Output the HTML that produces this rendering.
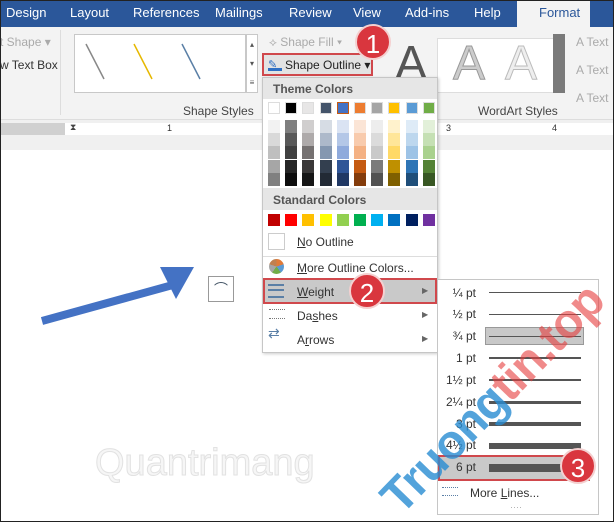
<!DOCTYPE html>
<html><head><meta charset="utf-8"><style>
*{margin:0;padding:0;box-sizing:border-box}
body{width:614px;height:522px;overflow:hidden;position:relative;background:#fff;font-family:"Liberation Sans",sans-serif;font-size:12px;color:#333}
.a{position:absolute}
.tab{position:absolute;top:5px;color:#fff;font-size:13px}
.sw{position:absolute;width:12px;height:12px}
.mi{position:absolute;left:297px;font-size:12px;color:#333}
.wl{position:absolute;font-size:12px;color:#333;text-align:right;width:40px;left:436px}
.ln{position:absolute;left:489px;width:92px;background:#555}
.badge{position:absolute;width:36px;height:36px;border-radius:50%;background:#d9363e;color:#fff;font-size:26px;text-align:center;line-height:36px;border:2px solid #f4d0d0}
</style></head><body>
<div class="a" style="left:0;top:0;width:614px;height:27px;background:#2b579a"></div>
<div class="tab" style="left:6px">Design</div>
<div class="tab" style="left:70px">Layout</div>
<div class="tab" style="left:133px">References</div>
<div class="tab" style="left:215px">Mailings</div>
<div class="tab" style="left:289px">Review</div>
<div class="tab" style="left:353px">View</div>
<div class="tab" style="left:405px">Add-ins</div>
<div class="tab" style="left:474px">Help</div>
<div class="a" style="left:517px;top:0;width:73px;height:28px;background:#f3f3f3;color:#2b579a;font-size:13px;padding:5px 0 0 22px">Format</div>
<div class="a" style="left:0;top:27px;width:614px;height:93px;background:#f3f3f3;border-bottom:1px solid #ddd"></div>
<div class="a" style="left:0;top:35px;color:#aaa">t Shape ▾</div>
<div class="a" style="left:0;top:58px;color:#333">w Text Box</div>
<div class="a" style="left:60px;top:30px;width:1px;height:85px;background:#ddd"></div>
<div class="a" style="left:74px;top:34px;width:172px;height:59px;background:#fff;border:1px solid #c8c8c8"></div>
<svg class="a" style="left:74px;top:34px" width="172" height="59"><line x1="12" y1="10" x2="30" y2="45" stroke="#888" stroke-width="1.5"/><line x1="60" y1="10" x2="78" y2="45" stroke="#e6b800" stroke-width="1.5"/><line x1="108" y1="10" x2="126" y2="45" stroke="#5a7fa6" stroke-width="1.5"/></svg>
<div class="a" style="left:246px;top:34px;width:12px;height:59px;background:#fff;border:1px solid #c8c8c8;font-size:8px;color:#555;text-align:center;line-height:19px">▴<br>▾<br>≡</div>
<div class="a" style="left:183px;top:104px;color:#444">Shape Styles</div>
<div class="a" style="left:269px;top:35px;color:#aaa">⟡ Shape Fill ▾</div>
<div class="a" style="left:262px;top:53px;width:111px;height:23px;border:2px solid #d0484c;background:#e3e3e3"></div>
<div class="a" style="left:268px;top:57px;width:14px;height:14px;border-bottom:3px solid #2f6fc4"><span style="font-size:11px;color:#2f6fc4">✎</span></div>
<div class="a" style="left:285px;top:58px;color:#222">Shape Outline ▾</div>
<div class="a" style="left:437px;top:38px;width:128px;height:55px;background:#fff;border:1px solid #ddd"></div>
<div class="a" style="left:395px;top:36px;font-size:48px;color:#555">A</div>
<div class="a" style="left:453px;top:36px;font-size:48px;color:#ccc;-webkit-text-stroke:1px #999">A</div>
<div class="a" style="left:505px;top:36px;font-size:48px;color:#eee;-webkit-text-stroke:1px #bbb">A</div>
<div class="a" style="left:553px;top:34px;width:12px;height:59px;background:#7a7a7a"></div>
<div class="a" style="left:478px;top:104px;color:#444">WordArt Styles</div>
<div class="a" style="left:576px;top:35px;color:#aaa;font-size:12px">A Text<br><br>A Text<br><br>A Text</div>
<div class="a" style="left:0;top:120px;width:614px;height:22px;background:#f0f0f0"></div>
<div class="a" style="left:0;top:123px;width:65px;height:12px;background:#d0d0d0"></div>
<div class="a" style="left:65px;top:123px;width:549px;height:12px;background:#fff"></div>
<div class="a" style="left:70px;top:122px;font-size:9px;color:#444">⧗</div>
<div class="a" style="left:167px;top:123px;font-size:9px">1</div>
<div class="a" style="left:446px;top:123px;font-size:9px">3</div>
<div class="a" style="left:552px;top:123px;font-size:9px">4</div>
<div class="a" style="left:0;top:142px;width:614px;height:8px;background:#f0f0f0"></div>
<svg class="a" style="left:30px;top:265px" width="180" height="70"><line x1="12" y1="56" x2="150" y2="18" stroke="#4472c4" stroke-width="8"/><polygon points="130,2 164,2 146,34" fill="#4472c4"/></svg>
<div class="a" style="left:208px;top:276px;width:26px;height:26px;border:1px solid #999;background:#fff;font-size:14px;text-align:center;line-height:24px;color:#456">⌒</div>
<div class="a" style="left:95px;top:442px;font-size:38px;color:#f6f6f6;-webkit-text-stroke:1px #e2e2e2">Quantrimang</div>
<div class="a" style="left:262px;top:77px;width:176px;height:276px;background:#fff;border:1px solid #c6c6c6;box-shadow:1px 1px 3px rgba(0,0,0,.2)"></div>
<div class="a" style="left:263px;top:78px;width:174px;height:21px;background:#e6e6e6;font-weight:bold;color:#555;padding:4px 0 0 10px">Theme Colors</div>
<div class="a" style="left:263px;top:188px;width:174px;height:22px;background:#e6e6e6;font-weight:bold;color:#555;padding:5px 0 0 10px">Standard Colors</div>
<div id="sw"></div>
<div class="a" style="left:268px;top:233px;width:17px;height:17px;border:1px solid #ccc"></div>
<div class="mi" style="top:235px"><u>N</u>o Outline</div>
<div class="a" style="left:263px;top:256px;width:174px;height:1px;background:#ddd"></div>
<div class="a" style="left:269px;top:259px;width:15px;height:15px;border-radius:50%;background:conic-gradient(#e07b39 0 20%,#5b9bd5 0 40%,#70ad47 0 60%,#a5a5a5 0 80%,#c08050 0)"></div>
<div class="mi" style="top:261px"><u>M</u>ore Outline Colors...</div>
<div class="a" style="left:263px;top:278px;width:174px;height:26px;background:#c9c9c9;border:2px solid #d0484c"></div>
<div class="a" style="left:268px;top:284px;width:16px;height:14px;border-top:2px solid #5a7fa6;border-bottom:2px solid #5a7fa6"><div style="margin-top:3px;height:2px;background:#5a7fa6"></div></div>
<div class="mi" style="top:285px"><u>W</u>eight</div>
<div class="a" style="left:422px;top:286px;font-size:8px;color:#666">▶</div>
<div class="a" style="left:269px;top:309px;width:16px;height:10px;border-top:1px dotted #777;border-bottom:1px dotted #777"></div>
<div class="mi" style="top:309px">Da<u>s</u>hes</div>
<div class="a" style="left:422px;top:310px;font-size:8px;color:#666">▶</div>
<div class="a" style="left:268px;top:328px;font-size:14px;color:#5a7fa6;line-height:10px">⇄</div>
<div class="mi" style="top:333px">A<u>r</u>rows</div>
<div class="a" style="left:422px;top:334px;font-size:8px;color:#666">▶</div>
<div class="a" style="left:437px;top:279px;width:162px;height:236px;background:#fff;border:1px solid #c6c6c6"></div>
<div class="a" style="left:485px;top:327px;width:99px;height:18px;background:#c8c8c8;border:1px solid #999"></div>
<div class="a" style="left:438px;top:455px;width:152px;height:26px;background:#c9c9c9;border:2px solid #d0484c"></div>
<div class="wl" style="top:286px">¼ pt</div><div class="ln" style="top:292px;height:1px"></div>
<div class="wl" style="top:307px">½ pt</div><div class="ln" style="top:314px;height:1px"></div>
<div class="wl" style="top:329px">¾ pt</div><div class="ln" style="top:336px;height:1px"></div>
<div class="wl" style="top:351px">1 pt</div><div class="ln" style="top:357px;height:2px"></div>
<div class="wl" style="top:373px">1½ pt</div><div class="ln" style="top:379px;height:2px"></div>
<div class="wl" style="top:395px">2¼ pt</div><div class="ln" style="top:401px;height:3px"></div>
<div class="wl" style="top:417px">3 pt</div><div class="ln" style="top:422px;height:4px"></div>
<div class="wl" style="top:438px">4½ pt</div><div class="ln" style="top:443px;height:6px"></div>
<div class="wl" style="top:460px">6 pt</div><div class="ln" style="top:464px;height:8px"></div>
<div class="a" style="left:442px;top:487px;width:16px;height:9px;border-top:1px dotted #5a7fa6;border-bottom:1px dotted #5a7fa6"></div>
<div class="a" style="left:470px;top:486px;color:#333">More <u>L</u>ines...</div>
<div class="a" style="left:510px;top:502px;font-size:9px;color:#aaa">····</div>
<div class="a" style="left:390px;top:478px;font-size:48px;font-weight:bold;transform:rotate(-46deg);transform-origin:left center;white-space:nowrap;letter-spacing:-1px"><span style="color:rgba(40,140,210,.8)">Truong</span><span style="color:rgba(230,60,60,.6)">tin.top</span></div>
<div class="badge" style="left:355px;top:24px">1</div>
<div class="badge" style="left:349px;top:273px">2</div>
<div class="badge" style="left:560px;top:448px">3</div>
<div class="a" style="left:0;top:0;width:614px;height:522px;border:1px solid #222;pointer-events:none"></div>
<script>
var th=['#ffffff','#000000','#e7e6e6','#44546a','#4472c4','#ed7d31','#a5a5a5','#ffc000','#5b9bd5','#70ad47'];
var sh=[['#f2f2f2','#d9d9d9','#bfbfbf','#a6a6a6','#808080'],['#7f7f7f','#595959','#404040','#262626','#0d0d0d'],['#d0cece','#aeaaaa','#757171','#3a3838','#161616'],['#d6dce4','#adb9ca','#8497b0','#333f4f','#222a35'],['#dae3f3','#b4c7e7','#8faadc','#2f5597','#203864'],['#fbe5d6','#f8cbad','#f4b183','#c55a11','#843c0c'],['#ededed','#dbdbdb','#c9c9c9','#7b7b7b','#525252'],['#fff2cc','#ffe699','#ffd966','#bf9000','#7f6000'],['#deebf7','#bdd7ee','#9dc3e6','#2e75b6','#1f4e79'],['#e2f0d9','#c5e0b4','#a9d18e','#548235','#385723']];
var st=['#c00000','#ff0000','#ffc000','#ffff00','#92d050','#00b050','#00b0f0','#0070c0','#002060','#7030a0'];
var h='';
for(var i=0;i<10;i++){var x=268+i*17.2;
h+='<div class="sw" style="left:'+x+'px;top:102px;background:'+th[i]+';border:1px solid '+(i==4?'#c55a11':'#ddd')+'"></div>';
for(var j=0;j<5;j++)h+='<div class="sw" style="left:'+x+'px;top:'+(120+j*13.2)+'px;height:13px;background:'+sh[i][j]+'"></div>';
h+='<div class="sw" style="left:'+x+'px;top:214px;background:'+st[i]+'"></div>';}
document.getElementById('sw').innerHTML=h;
</script>
</body></html>
